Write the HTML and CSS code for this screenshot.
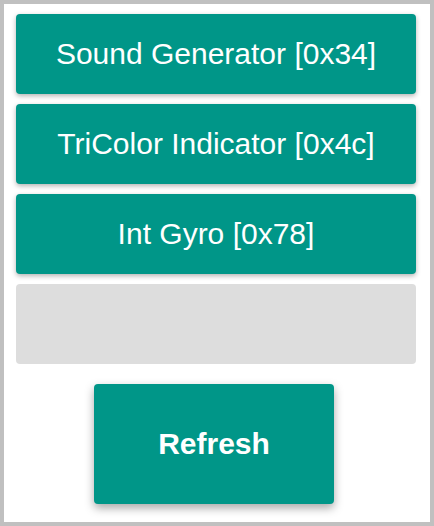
FILE: index.html
```html
<!DOCTYPE html>
<html>
<head>
<meta charset="utf-8">
<link rel="stylesheet" href="styles.css">
</head>
<body>
<div class="frame">
  <div class="list">
    <button class="item">Sound Generator [0x34]</button>
    <button class="item">TriColor Indicator [0x4c]</button>
    <button class="item">Int Gyro [0x78]</button>
    <div class="item empty"></div>
  </div>
  <button class="refresh">Refresh</button>
</div>
</body>
</html>
```
FILE: styles.css
```css
* { box-sizing: border-box; }
html, body { margin: 0; padding: 0; background: #fff; }
.frame {
  width: 434px;
  height: 526px;
  border: 4px solid #c0c0c0;
  padding: 10px 14px 0 12px;
  display: flex;
  flex-direction: column;
  font-family: "Liberation Sans", Arial, sans-serif;
}
.list {
  display: flex;
  flex-direction: column;
  gap: 10px;
}
.item {
  width: 400px;
  height: 80px;
  border: none;
  border-radius: 4px;
  background: #009688;
  color: #fff;
  font-family: "Liberation Sans", Arial, sans-serif;
  font-size: 30px;
  padding: 0;
  box-shadow: 0 2px 5px rgba(0,0,0,0.3);
}
.item.empty {
  background: #dddddd;
  box-shadow: none;
}
.refresh {
  margin: 20px 0 0 78px;
  width: 240px;
  height: 120px;
  border: none;
  border-radius: 4px;
  background: #009688;
  color: #fff;
  font-family: "Liberation Sans", Arial, sans-serif;
  font-weight: bold;
  font-size: 30px;
  padding: 0;
  box-shadow: 0 4px 10px rgba(0,0,0,0.35);
}
```
